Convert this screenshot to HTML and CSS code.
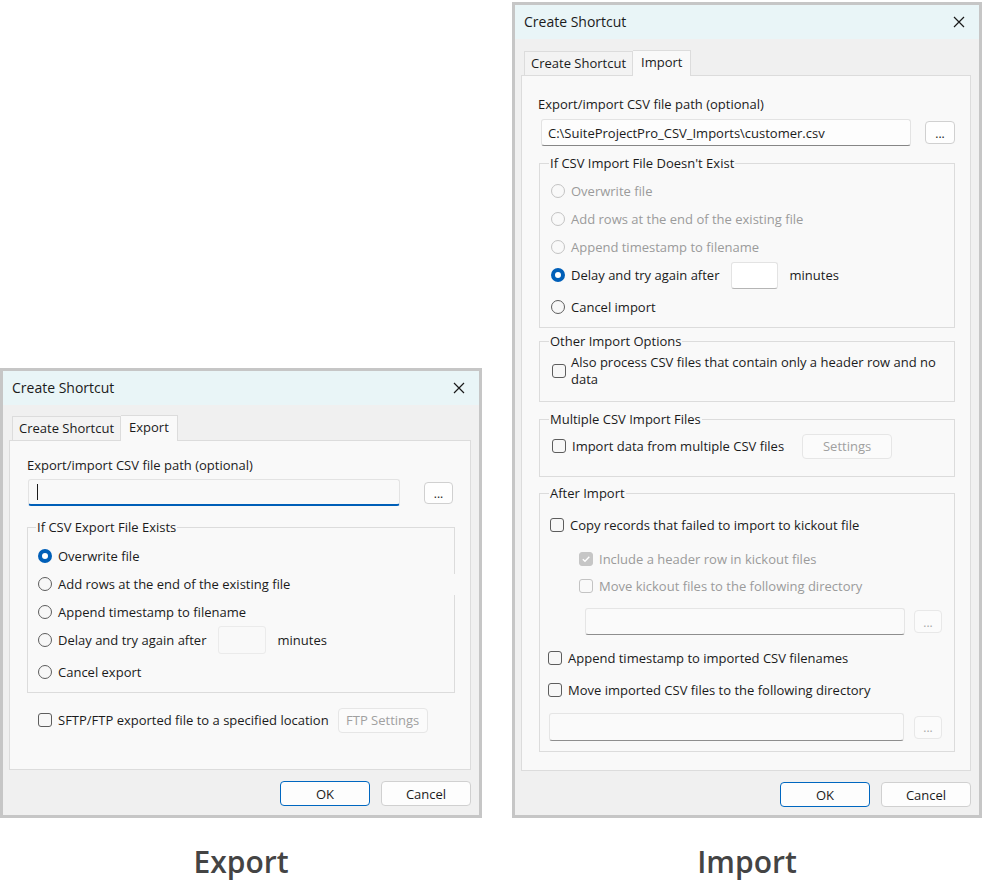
FILE: index.html
```html
<!DOCTYPE html>
<html>
<head>
<meta charset="utf-8">
<link rel="stylesheet" href="styles.css">
</head>
<body>
<div class="page">
  <div class="col col-export">
    <div class="dialog">
      <div class="titlebar">
        <span class="title">Create Shortcut</span>
        <svg class="close" width="12" height="12" viewBox="0 0 12 12"><path d="M1 1 L11 11 M11 1 L1 11" stroke="#1a1a1a" stroke-width="1.2" fill="none"/></svg>
      </div>
      <div class="body body-export">
        <div class="tabs">
          <div class="tab">Create Shortcut</div>
          <div class="tab active">Export</div>
        </div>
        <div class="panel panel-export">
          <div class="label lbl-export">Export/import CSV file path (optional)</div>
          <div class="path-row ex-path-row">
            <div class="input focus ex-path"><span class="caret"></span></div>
            <div class="btn-dots ex-dots">...</div>
          </div>
          <fieldset class="group ex-group1">
            <legend>If CSV Export File Exists</legend>
            <span class="border-gap"></span>
            <div class="group-body gb-ex1">
              <div class="row"><span class="radio checked"></span><span class="text">Overwrite file</span></div>
              <div class="row"><span class="radio"></span><span class="text">Add rows at the end of the existing file</span></div>
              <div class="row"><span class="radio"></span><span class="text">Append timestamp to filename</span></div>
              <div class="row"><span class="radio"></span><span class="text">Delay and try again after</span><span class="mini-input ex-mini"></span><span class="text minutes">minutes</span></div>
              <div class="row row-last"><span class="radio"></span><span class="text">Cancel export</span></div>
            </div>
          </fieldset>
          <div class="row sftp-row"><span class="check"></span><span class="text">SFTP/FTP exported file to a specified location</span><span class="btn disabled ftp-btn">FTP Settings</span></div>
        </div>
        <div class="actions">
          <span class="btn primary">OK</span>
          <span class="btn">Cancel</span>
        </div>
      </div>
    </div>
    <div class="caption">Export</div>
  </div>

  <div class="col col-import">
    <div class="dialog">
      <div class="titlebar">
        <span class="title">Create Shortcut</span>
        <svg class="close" width="12" height="12" viewBox="0 0 12 12"><path d="M1 1 L11 11 M11 1 L1 11" stroke="#1a1a1a" stroke-width="1.2" fill="none"/></svg>
      </div>
      <div class="body body-import">
        <div class="tabs">
          <div class="tab">Create Shortcut</div>
          <div class="tab active">Import</div>
        </div>
        <div class="panel panel-import">
          <div class="label lbl-import">Export/import CSV file path (optional)</div>
          <div class="path-row im-path-row">
            <div class="input filled im-path">C:\SuiteProjectPro_CSV_Imports\customer.csv</div>
            <div class="btn-dots im-dots">...</div>
          </div>

          <fieldset class="group im-group1">
            <legend>If CSV Import File Doesn't Exist</legend>
            <div class="group-body gb-im1">
              <div class="row disabled"><span class="radio"></span><span class="text">Overwrite file</span></div>
              <div class="row disabled"><span class="radio"></span><span class="text">Add rows at the end of the existing file</span></div>
              <div class="row disabled"><span class="radio"></span><span class="text">Append timestamp to filename</span></div>
              <div class="row"><span class="radio checked"></span><span class="text">Delay and try again after</span><span class="mini-input im-mini"></span><span class="text minutes">minutes</span></div>
              <div class="row row-last"><span class="radio"></span><span class="text">Cancel import</span></div>
            </div>
          </fieldset>

          <fieldset class="group im-group2">
            <legend>Other Import Options</legend>
            <div class="group-body gb-im2">
              <div class="row multi"><span class="check"></span><span class="text"><span class="line">Also process CSV files that contain only a header row and no</span><span class="line">data</span></span></div>
            </div>
          </fieldset>

          <fieldset class="group im-group3">
            <legend>Multiple CSV Import Files</legend>
            <div class="group-body gb-im3">
              <div class="row"><span class="check"></span><span class="text">Import data from multiple CSV files</span><span class="btn disabled settings-btn">Settings</span></div>
            </div>
          </fieldset>

          <fieldset class="group im-group4">
            <legend>After Import</legend>
            <div class="group-body gb-im4">
              <div class="row"><span class="check"></span><span class="text">Copy records that failed to import to kickout file</span></div>
              <div class="row sub disabled sub-first"><span class="check checked"><svg width="10" height="10" viewBox="0 0 10 10"><path d="M1.8 5.2 L4 7.3 L8.3 2.8" stroke="#fff" stroke-width="1.4" fill="none"/></svg></span><span class="text">Include a header row in kickout files</span></div>
              <div class="row sub disabled"><span class="check"></span><span class="text">Move kickout files to the following directory</span></div>
              <div class="path-row kick-row">
                <div class="input disabled-input kick-input"></div>
                <div class="btn-dots disabled kick-dots">...</div>
              </div>
              <div class="row append-row"><span class="check"></span><span class="text">Append timestamp to imported CSV filenames</span></div>
              <div class="row move-row"><span class="check"></span><span class="text">Move imported CSV files to the following directory</span></div>
              <div class="path-row move-path-row">
                <div class="input disabled-input move-input"></div>
                <div class="btn-dots disabled move-dots">...</div>
              </div>
            </div>
          </fieldset>
        </div>
        <div class="actions">
          <span class="btn primary">OK</span>
          <span class="btn">Cancel</span>
        </div>
      </div>
    </div>
    <div class="caption">Import</div>
  </div>
</div>
</body>
</html>
```

FILE: styles.css
```css
* { box-sizing: border-box; }

html, body {
  margin: 0;
  padding: 0;
  background: #ffffff;
}

body {
  font-family: "Open Sans", "Noto Sans", sans-serif;
  font-size: 13px;
  color: #1b1b1b;
}

.page {
  display: flex;
  align-items: flex-end;
  width: 982px;
  height: 892px;
}

.col {
  display: flex;
  flex-direction: column;
}

.col-export { width: 482px; }
.col-import { width: 470px; margin-left: 30px; }

.dialog {
  border: 3px solid #c6c6c6;
  background: #f0f0f0;
  display: flex;
  flex-direction: column;
}

.titlebar {
  height: 34px;
  background: #e9f5f7;
  display: flex;
  align-items: center;
  justify-content: space-between;
  padding: 0 14px 0 9px;
}

.title {
  font-size: 14px;
  color: #1b1b1b;
  margin-top: -2px;
}

.close { display: block; }

.body {
  display: flex;
  flex-direction: column;
  padding: 10px 8px 9px 6px;
}
.body-import { padding-top: 11px; padding-bottom: 8px; }

.tabs {
  display: flex;
  align-items: flex-end;
  margin-left: 3px;
  height: 26px;
  margin-bottom: -1px;
  position: relative;
  z-index: 1;
}

.tab {
  height: 24px;
  line-height: 22px;
  padding: 0 6px;
  border: 1px solid #dcdcdc;
  border-bottom: none;
  background: #f3f3f3;
  font-size: 13px;
  margin-bottom: 1px;
}

.tab.active {
  height: 26px;
  line-height: 22px;
  background: #f9f9f9;
  border-left: none;
  padding: 0 8px;
  margin-bottom: 0;
}

.panel {
  background: #f9f9f9;
  border: 1px solid #dcdcdc;
  display: flex;
  flex-direction: column;
  align-items: flex-start;
}

.panel-export { height: 330px; padding-left: 17px; }
.panel-import { height: 696px; padding-left: 16px; }

.label {
  height: 18px;
  line-height: 18px;
}
.lbl-export { margin-top: 15px; }
.lbl-import { margin-top: 19px; }

.path-row {
  display: flex;
  align-items: center;
}

.input {
  height: 27px;
  border: 1px solid #e3e3e3;
  border-radius: 3px;
  background: #fbfbfb;
  display: flex;
  align-items: center;
}

.input.focus {
  border-bottom: 2px solid #005fb8;
  background: #f9f9f9;
  padding-left: 8px;
}

.caret {
  display: block;
  width: 1px;
  height: 16px;
  background: #1b1b1b;
}

.input.filled {
  background: #fdfdfd;
  border-bottom-color: #868686;
  padding-left: 6px;
}

.input.disabled-input {
  background: #fafafa;
  border-color: #e5e5e5;
  border-bottom-color: #8e8e8e;
}

.ex-path-row { margin-top: 5px; margin-left: 1px; }
.ex-path { width: 372px; }
.ex-dots { margin-left: 24px; width: 29px; height: 22px; }

.im-path-row { margin-top: 6px; margin-left: 3px; }
.im-path { width: 370px; }
.im-dots { margin-left: 14px; width: 30px; height: 23px; }

.btn-dots {
  border: 1px solid #d0d0d0;
  border-radius: 4px;
  background: #fefefe;
  font-size: 12px;
  line-height: 14px;
  text-align: center;
  color: #1b1b1b;
  display: flex;
  align-items: center;
  justify-content: center;
  padding-top: 2px;
}

.btn-dots.disabled {
  color: #a8a8a8;
  border-color: #e8e8e8;
  background: #fbfbfb;
}

.group {
  border: 1px solid #dcdcdc;
  margin: 0;
  padding: 0;
  position: relative;
  min-width: 0;
}

.group legend {
  margin-left: 8px;
  padding: 0 1px;
  height: 18px;
  line-height: 18px;
}

.ex-group1 { width: 428px; margin-top: 12px; }
.im-group1 { width: 416px; margin-top: 8px; margin-left: 1px; }
.im-group2 { width: 416px; margin-top: 4px; margin-left: 1px; }
.im-group3 { width: 416px; margin-top: 8px; margin-left: 1px; }
.im-group4 { width: 416px; margin-top: 7px; margin-left: 1px; }

.im-group1 legend,
.im-group2 legend,
.im-group3 legend,
.im-group4 legend { margin-left: 9px; }

.border-gap {
  position: absolute;
  right: -1px;
  top: 38px;
  width: 1px;
  height: 21px;
  background: #f9f9f9;
}

.group-body {
  display: flex;
  flex-direction: column;
}

.gb-ex1 { padding: 6px 0 6px 10px; }
.gb-im1 { padding: 5px 0 6px 11px; }
.gb-im2 { padding: 4px 0 13px 12px; }
.gb-im3 { padding: 4px 0 16px 12px; }
.gb-im4 { padding: 9px 0 10px 10px; }

.row {
  display: flex;
  align-items: center;
  height: 28px;
}

.row-last { margin-top: 4px; }

.row .text {
  margin-left: 6px;
  white-space: nowrap;
}

.row.disabled .text { color: #9b9b9b; }

.row.multi {
  height: auto;
}
.row.multi .text {
  display: flex;
  flex-direction: column;
  margin-left: 5px;
}
.row.multi .line {
  display: block;
  height: 17px;
  line-height: 17px;
}

.radio {
  width: 14px;
  height: 14px;
  border-radius: 50%;
  border: 1px solid #5d5d5d;
  background: #f7f7f7;
  flex: none;
}

.radio.checked {
  border: none;
  background: #ffffff;
  box-shadow: inset 0 0 0 4px #005fb8;
}

.row.disabled .radio {
  border-color: #c3c3c3;
  background: #f9f9f9;
}

.check {
  width: 14px;
  height: 14px;
  border-radius: 3px;
  border: 1px solid #5d5d5d;
  background: #f7f7f7;
  flex: none;
  display: flex;
  align-items: center;
  justify-content: center;
}

.check svg { display: block; }

.row.disabled .check {
  border-color: #c3c3c3;
  background: #f9f9f9;
}

.row.disabled .check.checked {
  background: #c6c6c6;
  border-color: #c6c6c6;
}

.mini-input {
  height: 28px;
  border: 1px solid #ebebeb;
  border-radius: 3px;
  background: #f9f9f9;
  flex: none;
}
.ex-mini { width: 48px; margin-left: 12px; }
.im-mini { width: 47px; margin-left: 12px; background: #ffffff; border-color: #e3e3e3; border-bottom-color: #b5b5b5; height: 27px; }
.minutes { margin-left: 11px !important; }

.btn {
  display: flex;
  align-items: center;
  justify-content: center;
  width: 90px;
  height: 25px;
  border: 1px solid #d0d0d0;
  border-radius: 4px;
  background: #fdfdfd;
  font-size: 13px;
  color: #1b1b1b;
  flex: none;
}

.btn.primary {
  border-color: #0067c0;
}

.btn.disabled {
  color: #a0a0a0;
  border-color: #e6e6e6;
  background: #fbfbfb;
}

.sftp-row {
  margin-top: 13px;
  margin-left: 11px;
}
.ftp-btn { margin-left: 9px; }
.settings-btn { margin-left: 18px; }

.sub { margin-left: 29px; height: 27px; }
.sub-first { margin-top: 6px; }

.kick-row { margin-top: 9px; margin-left: 35px; }
.kick-input { width: 320px; }
.kick-dots { margin-left: 9px; width: 28px; height: 23px; }

.append-row { margin-top: 9px; margin-left: -2px; }
.move-row { margin-top: 4px; margin-left: -2px; }

.move-path-row { margin-top: 9px; margin-left: -1px; }
.move-input { width: 355px; height: 28px; }
.move-dots { margin-left: 10px; width: 28px; height: 23px; }

.actions {
  display: flex;
  justify-content: flex-end;
  gap: 11px;
  margin-top: 11px;
}

.caption {
  height: 74px;
  padding-top: 26px;
  line-height: 36px;
  text-align: center;
  font-family: "Open Sans", sans-serif;
  font-weight: 600;
  font-size: 30px;
  color: #444444;
}
```
